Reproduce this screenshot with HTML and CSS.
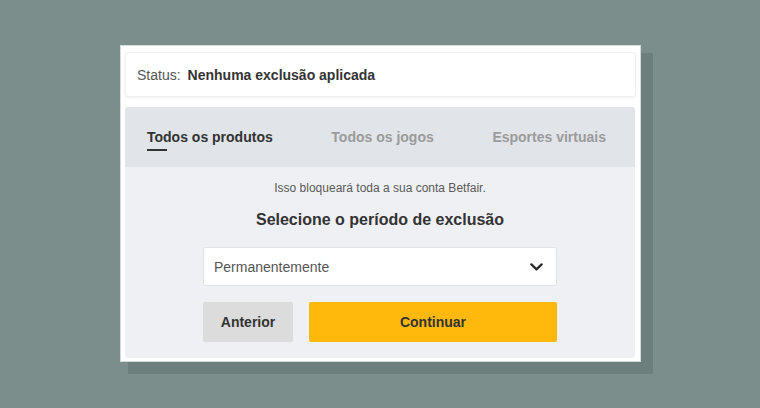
FILE: index.html
```html
<!DOCTYPE html>
<html lang="pt">
<head>
<meta charset="utf-8">
<title>Autoexclusão</title>
<link rel="stylesheet" href="styles.css">
</head>
<body>
  <div class="card">
    <div class="status">
      <span class="status-label">Status:</span>
      <span class="status-value">Nenhuma exclusão aplicada</span>
    </div>
    <div class="panel">
      <nav class="tabs">
        <span class="tab active">Todos os produtos</span>
        <span class="tab">Todos os jogos</span>
        <span class="tab">Esportes virtuais</span>
      </nav>
      <div class="content">
        <p class="note">Isso bloqueará toda a sua conta Betfair.</p>
        <h2 class="title">Selecione o período de exclusão</h2>
        <div class="select">
          <span class="select-text">Permanentemente</span>
          <svg class="chevron" width="13" height="8" viewBox="0 0 13 8" aria-hidden="true">
            <path d="M1.4 1.4 L6.5 6.3 L11.6 1.4" fill="none" stroke="#2b2b2b" stroke-width="2.3" stroke-linecap="round" stroke-linejoin="round"/>
          </svg>
        </div>
        <div class="actions">
          <button class="btn btn-back">Anterior</button>
          <button class="btn btn-next">Continuar</button>
        </div>
      </div>
    </div>
  </div>
</body>
</html>
```

FILE: styles.css
```css
* {
  box-sizing: border-box;
}

html, body {
  margin: 0;
  height: 100%;
}

body {
  background: #7b8e8b;
  padding: 45px 0 0 120px;
  font-family: "Liberation Sans", Arial, sans-serif;
  color: #333;
}

.card {
  width: 521px;
  height: 317px;
  background: #fff;
  border: 1px solid #d6dada;
  box-shadow: 10px 10px 0 2px #6d7f7d;
  padding: 6px 4px 3px 4px;
  display: flex;
  flex-direction: column;
}

.status {
  height: 45px;
  background: #fff;
  border: 1px solid #f0f0f0;
  border-radius: 3px;
  box-shadow: 0 1px 3px rgba(0, 0, 0, 0.06);
  display: flex;
  align-items: center;
  padding-left: 11px;
  font-size: 14px;
  margin-bottom: 10px;
}

.status-label {
  color: #555;
}

.status-value {
  font-weight: bold;
  color: #333;
  margin-left: 7px;
}

.panel {
  flex: 1;
  width: 510px;
  border-radius: 3px;
  overflow: hidden;
  display: flex;
  flex-direction: column;
}

.tabs {
  height: 60px;
  background: #e1e4e8;
  display: flex;
  align-items: center;
  justify-content: space-between;
  padding: 0 29px 0 22px;
  font-size: 14px;
  font-weight: bold;
}

.tab {
  color: #9b9b9b;
  position: relative;
}

.tab.active {
  color: #333;
}

.tab.active::after {
  content: "";
  position: absolute;
  left: 0;
  top: 20px;
  width: 20px;
  height: 2px;
  background: #333;
}

.content {
  flex: 1;
  background: #eff0f3;
  display: flex;
  flex-direction: column;
  align-items: center;
  padding-top: 13px;
}

.note {
  margin: 0;
  font-size: 12px;
  line-height: 16px;
  color: #5a5a5a;
}

.title {
  margin: 14px 0 0;
  font-size: 16px;
  line-height: 20px;
  font-weight: bold;
  color: #333;
}

.select {
  margin-top: 17px;
  width: 354px;
  height: 39px;
  background: #fff;
  border: 1px solid #e0e2e5;
  border-radius: 2px;
  display: flex;
  align-items: center;
  justify-content: space-between;
  padding: 0 13px 0 10px;
  font-size: 14px;
  color: #555;
}

.chevron {
  display: block;
}

.actions {
  margin-top: 16px;
  width: 354px;
  display: flex;
  gap: 16px;
}

.btn {
  height: 40px;
  border: none;
  border-radius: 2px;
  font-family: "Liberation Sans", Arial, sans-serif;
  font-size: 14px;
  font-weight: bold;
  color: #333;
  padding: 0;
}

.btn-back {
  width: 90px;
  background: #dcdcdc;
}

.btn-next {
  flex: 1;
  background: #ffb80c;
}
```
